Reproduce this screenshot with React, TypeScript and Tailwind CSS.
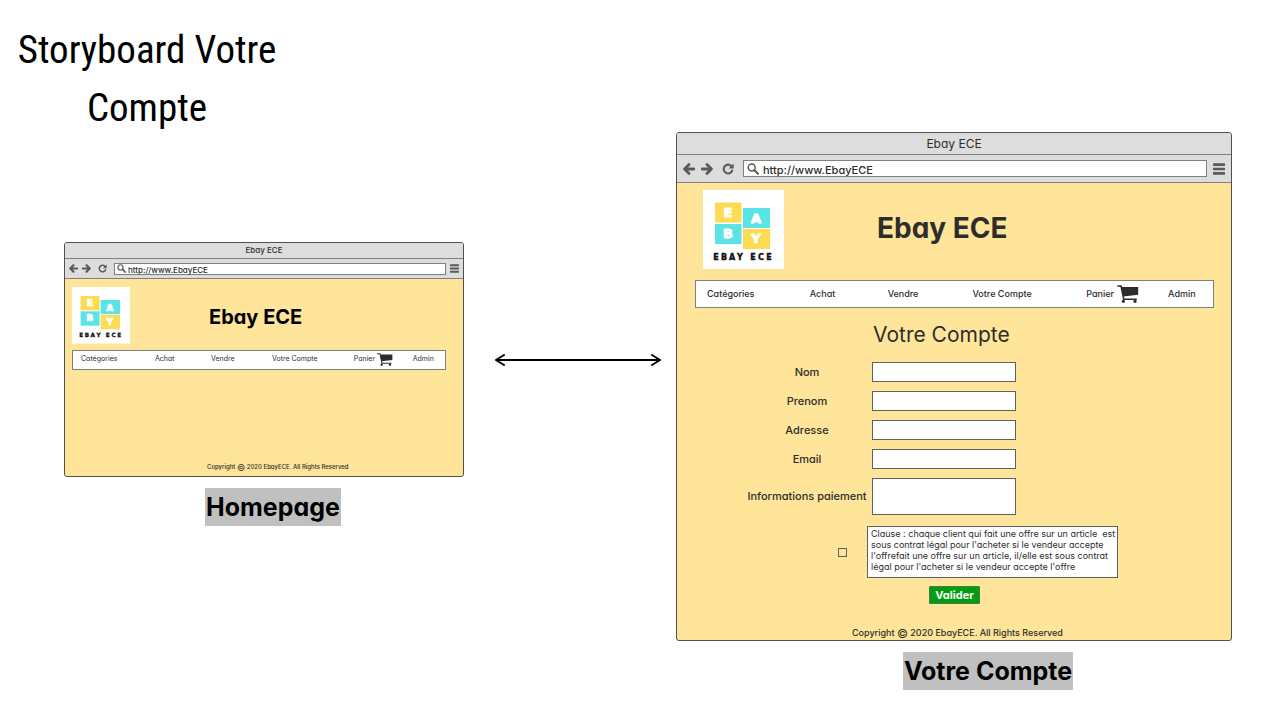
import type { ReactNode } from "react";
import clsx from "clsx";

type Size = "sm" | "lg";

const NAV_ITEMS = ["Catégories", "Achat", "Vendre", "Votre Compte", "Panier", "Admin"];

function ArrowIcon({ className }: { className?: string }) {
  return (
    <svg viewBox="0 0 12 12" className={className} aria-hidden="true">
      <path
        d="M6 1.6 1.6 6 6 10.4M2 6h9"
        fill="none"
        stroke="#5a5a5a"
        strokeWidth="2.8"
        strokeLinecap="round"
        strokeLinejoin="round"
      />
    </svg>
  );
}

function ReloadIcon({ className }: { className?: string }) {
  return (
    <svg viewBox="0 0 12 12" className={className} aria-hidden="true">
      <path d="M10.2 7.6A4.4 4.4 0 1 1 9.2 2.9" fill="none" stroke="#5a5a5a" strokeWidth="2.1" strokeLinecap="round" />
      <path d="M11.6.6v5H6.6z" fill="#5a5a5a" />
    </svg>
  );
}

function SearchIcon({ className }: { className?: string }) {
  return (
    <svg viewBox="0 0 12 12" className={className} aria-hidden="true">
      <circle cx="4.7" cy="4.5" r="3.5" fill="none" stroke="#5a5a5a" strokeWidth="1.5" />
      <path d="m7.4 7.2 3.6 3.6" stroke="#5a5a5a" strokeWidth="2" strokeLinecap="round" />
    </svg>
  );
}

function MenuIcon({ className }: { className?: string }) {
  return (
    <svg viewBox="0 0 12 12" className={className} aria-hidden="true">
      <path d="M.9 1.6h10.2M.9 6h10.2M.9 10.4h10.2" stroke="#5a5a5a" strokeWidth="2.6" strokeLinecap="round" />
    </svg>
  );
}

function CartIcon({ className }: { className?: string }) {
  return (
    <svg viewBox="0 0 22 18" className={className} aria-hidden="true">
      <path d="M4.2 2h17v7.8L6.4 11.4z" fill="#2d2d2d" />
      <path d="M.8 1h3.2l2.7 13.2h12.6" fill="none" stroke="#2d2d2d" strokeWidth="1.5" strokeLinecap="round" />
      <circle cx="6.4" cy="16.3" r="1.6" fill="#2d2d2d" />
      <circle cx="18" cy="16.3" r="1.6" fill="#2d2d2d" />
    </svg>
  );
}

function Logo({ className }: { className?: string }) {
  return (
    <svg viewBox="0 0 81 79" className={className} role="img" aria-label="Ebay ECE">
      <rect width="81" height="79" fill="#fff" />
      <rect x="12" y="12.5" width="26.5" height="20" fill="#fddc55" />
      <rect x="40" y="18" width="27" height="20" fill="#5be3e6" />
      <rect x="12" y="34" width="26.5" height="20" fill="#5be3e6" />
      <rect x="40" y="39" width="27" height="20" fill="#fddc55" />
      <g
        fill="#fff"
        stroke="#fff"
        strokeWidth="1"
        strokeLinejoin="round"
        fontFamily="'DejaVu Sans', sans-serif"
        fontWeight="700"
        fontSize="13"
        textAnchor="middle"
      >
        <text x="25" y="27">E</text>
        <text x="53" y="33">A</text>
        <text x="25" y="48">B</text>
        <text x="53" y="53">Y</text>
      </g>
      <g
        fill="#111"
        stroke="#111"
        strokeWidth=".4"
        fontFamily="'DejaVu Sans', sans-serif"
        fontWeight="700"
        fontSize="8"
        textAnchor="middle"
      >
        <text x="13" y="70">E</text>
        <text x="21" y="70">B</text>
        <text x="29" y="70">A</text>
        <text x="37" y="70">Y</text>
        <text x="50" y="70">E</text>
        <text x="58" y="70">C</text>
        <text x="66" y="70">E</text>
      </g>
    </svg>
  );
}

function SiteNav({ size }: { size: Size }) {
  const lg = size === "lg";
  return (
    <nav
      className={clsx(
        "grid grid-cols-[103fr_78fr_85fr_114fr_82fr_45fr] items-center border border-[#808080] bg-white",
        lg
          ? "ml-[18px] mr-[17px] mt-[11px] h-7 pb-px pl-[11px] text-[9px] font-medium"
          : "ml-[7px] mr-[17px] mt-[6px] h-5 pl-2 text-[7px]",
      )}
    >
      {NAV_ITEMS.map((item) => (
        <a key={item} href="#" className="flex items-center whitespace-nowrap">
          {item}
          {item === "Panier" && <CartIcon className={lg ? "ml-[3px] h-[18px] w-[22px]" : "ml-0.5 h-[13px] w-4"} />}
        </a>
      ))}
    </nav>
  );
}

function BrowserWindow({ size, children }: { size: Size; children?: ReactNode }) {
  const lg = size === "lg";
  const icon = lg ? "size-3" : "size-[9px]";
  return (
    <section className="flex flex-col overflow-hidden rounded-[3px] border border-[#505050] bg-[#ffe599] text-[#2d2d2d]">
      <div
        className={clsx(
          "border-b border-[#808080] bg-[#dddddd] text-center",
          lg ? "h-[22px] text-[12px] leading-[21px]" : "h-4 text-[8px] font-medium leading-[15px]",
        )}
      >
        Ebay ECE
      </div>
      <div
        className={clsx(
          "flex items-center border-b border-[#808080] bg-[#dddddd]",
          lg ? "h-7 gap-1.5 px-1.5" : "h-5 gap-1 px-1",
        )}
      >
        <button type="button" aria-label="Précédent">
          <ArrowIcon className={icon} />
        </button>
        <button type="button" aria-label="Suivant">
          <ArrowIcon className={clsx(icon, "rotate-180")} />
        </button>
        <button type="button" aria-label="Actualiser" className="mx-[3px]">
          <ReloadIcon className={icon} />
        </button>
        <label
          className={clsx(
            "flex min-w-0 flex-1 items-center border border-[#808080] bg-white",
            lg ? "h-[17px] gap-1 pl-[3px]" : "h-3 gap-0.5 pl-0.5",
          )}
        >
          <SearchIcon className={clsx(icon, "shrink-0")} />
          <input
            aria-label="Adresse du site"
            defaultValue="http://www.EbayECE"
            className={clsx(
              "min-w-0 flex-1 bg-transparent font-medium outline-none",
              lg ? "h-4 pt-1 text-[11px]" : "h-3 pt-0.5 text-[8px]",
            )}
          />
        </label>
        <button type="button" aria-label="Menu">
          <MenuIcon className={icon} />
        </button>
      </div>
      <header
        className={clsx(
          "grid items-center",
          lg ? "grid-cols-[81px_1fr] pl-[26px] pt-[7px]" : "grid-cols-[58px_1fr] pl-[7px] pt-2",
        )}
      >
        <Logo className="w-full" />
        <h2
          className={clsx(
            "font-bold",
            lg ? "pb-1 pl-[93px] text-[28px] leading-8" : "pl-[79px] pt-1 text-[20px] leading-6 text-black",
          )}
        >
          Ebay ECE
        </h2>
      </header>
      <SiteNav size={size} />
      {children}
      <footer
        className={clsx(
          "font-medium",
          lg
            ? "mt-[22px] pl-[175px] text-[9px] leading-[14px]"
            : "mt-[92px] pb-1 pl-[142px] text-[6px] leading-[10px]",
        )}
      >
        Copyright{" "}
        <span className={clsx("align-middle font-normal leading-none", lg ? "text-[12px]" : "text-[9px]")}>©</span> 2020
        EbayECE. All Rights Reserved
      </footer>
    </section>
  );
}

const FIELD = "w-full border border-[#606060] bg-white px-1 text-[11px] outline-none";

function Field({ id, label }: { id: string; label: string }) {
  return (
    <>
      <label htmlFor={id} className="text-center">
        {label}
      </label>
      <input id={id} type="text" className={clsx(FIELD, "h-5")} />
    </>
  );
}

function AccountForm() {
  return (
    <form className="pl-[70px] pr-[116px]">
      <h3 className="mb-3 mt-3 pl-[126px] text-[21px] leading-[30px]">Votre Compte</h3>
      <div className="grid grid-cols-[120px_144px] items-center gap-x-[5px] gap-y-[9px] text-[11px] font-medium">
        <Field id="nom" label="Nom" />
        <Field id="prenom" label="Prenom" />
        <Field id="adresse" label="Adresse" />
        <Field id="email" label="Email" />
        <label htmlFor="paiement" className="whitespace-nowrap text-center">
          Informations paiement
        </label>
        <textarea id="paiement" className={clsx(FIELD, "block h-[37px] resize-none")} />
      </div>
      <div className="mt-[11px] flex items-center gap-5 pl-[91px]">
        <input
          id="clause"
          type="checkbox"
          className="size-[9px] shrink-0 appearance-none border border-[#606060] checked:bg-[#606060]"
        />
        <label
          htmlFor="clause"
          className="flex-1 whitespace-pre border border-[#606060] bg-white pb-[5px] pl-[3px] pr-0.5 pt-px text-[9px] leading-[11px]"
        >
          {"Clause : chaque client qui fait une offre sur un article  est\nsous contrat légal pour l'acheter si le vendeur accepte\nl'offrefait une offre sur un article, il/elle est sous contrat\nlégal pour l'acheter si le vendeur accepte l'offre"}
        </label>
      </div>
      <button
        type="submit"
        className="ml-[182px] mt-2 block h-[18px] w-[51px] rounded-[1px] border border-[#4a7a4a] bg-[#009e0f] text-[11px] font-bold leading-4 text-white"
      >
        Valider
      </button>
    </form>
  );
}

function Caption({ className, children }: { className?: string; children: ReactNode }) {
  return (
    <figcaption className={clsx("mt-[11px] text-center", className)}>
      <span className="inline-block bg-[#c0c0c0] px-px text-[25px] font-bold leading-[38px] text-black">{children}</span>
    </figcaption>
  );
}

export default function App() {
  return (
    <main className="grid min-h-screen grid-cols-[minmax(0,464fr)_minmax(0,212fr)_minmax(0,556fr)] items-start bg-white pr-12 font-['Inter','Open_Sans',sans-serif] [font-feature-settings:'cv11']">
      <div>
        <h1 className="w-[294px] pt-[21px] text-center font-['Roboto_Condensed','Liberation_Sans_Narrow',sans-serif] text-[39px] leading-[58px] text-black">
          Storyboard Votre Compte
        </h1>
        <figure className="ml-16 mt-[105px]">
          <BrowserWindow size="sm" />
          <Caption className="pl-[18px]">Homepage</Caption>
        </figure>
      </div>
      <div className="pl-[30px] pr-[14px] pt-[354px]">
        <svg viewBox="0 0 168 12" className="w-full" aria-hidden="true">
          <path
            d="M2 6h164M10 1 2 6l8 5M158 1l8 5-8 5"
            fill="none"
            stroke="#000"
            strokeWidth="2"
            strokeLinecap="round"
            strokeLinejoin="round"
          />
        </svg>
      </div>
      <figure className="pt-[132px]">
        <BrowserWindow size="lg">
          <AccountForm />
        </BrowserWindow>
        <Caption className="pl-[68px]">Votre Compte</Caption>
      </figure>
    </main>
  );
}
